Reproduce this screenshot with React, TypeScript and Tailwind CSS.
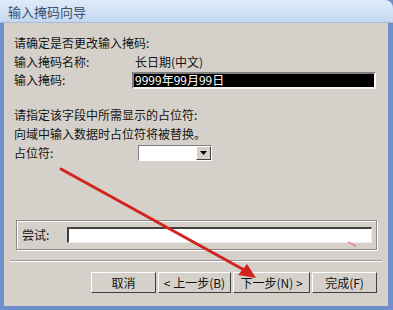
import React from 'react';

const font = { fontFamily: '"Noto Sans CJK SC", "Liberation Sans", sans-serif' };

function Btn({ label }: { label: string }) {
  return (
    <div className="h-[21px] border border-t-white border-l-white border-b-[#404040] border-r-[#404040] bg-[#d5d1ca] flex items-center justify-center text-[12px] text-[#111]">
      {label}
    </div>
  );
}

export default function App() {
  return (
    <div style={font} className="w-[393px] h-[310px] relative overflow-hidden bg-[#6f8fcb] leading-none">
      {/* title bar */}
      <div className="h-[23px] rounded-tr-[8px] bg-gradient-to-b from-[#e0ebf9] to-[#c4d7f1] border-b border-[#a8bcd8] flex items-center pl-[8px] text-[13px] text-[#3c4f6c]">
        输入掩码向导
      </div>

      <div className="ml-[4px] mr-[5px] h-[283px] bg-[#d5d1ca] text-[12px] text-[#141414] flex flex-col">
        <div className="pl-[10px] mt-[10px] h-[19px] flex items-center">请确定是否更改输入掩码:</div>
        <div className="pl-[10px] h-[19px] flex items-center">
          <span className="w-[121px]">输入掩码名称:</span>
          <span>长日期(中文)</span>
        </div>
        <div className="pl-[10px] h-[18px] flex items-center">
          <span className="w-[118px]">输入掩码:</span>
          <div className="w-[244px] h-[17px] bg-black border-t-2 border-l-2 border-t-[#808080] border-l-[#808080] border-r-2 border-b-2 border-r-white border-b-[#f4f4f4] flex items-center pl-[1px] text-white text-[12px]">
            9999年99月99日
          </div>
        </div>

        <div className="pl-[10px] mt-[16px] h-[19px] flex items-center">请指定该字段中所需显示的占位符:</div>
        <div className="pl-[10px] h-[19px] flex items-center">向域中输入数据时占位符将被替换。</div>
        <div className="pl-[10px] h-[19px] flex items-center">
          <span className="w-[124px]">占位符:</span>
          <div className="w-[74px] h-[16px] bg-white border border-t-[#808080] border-l-[#808080] border-r-white border-b-white flex justify-end">
            <div className="w-[15px] h-full bg-[#d5d1ca] border border-t-white border-l-white border-r-[#404040] border-b-[#404040] flex items-center justify-center">
              <svg width="7" height="4" viewBox="0 0 7 4"><path d="M0 0h7L3.5 4z" fill="#000" /></svg>
            </div>
          </div>
        </div>

        {/* try group */}
        <div className="ml-[12px] mt-[58px] w-[361px] h-[30px] border border-[#8a8a8a] shadow-[inset_1px_1px_0_#fff,1px_1px_0_#fff] flex items-center pl-[5px]">
          <span className="w-[45px]">尝试:</span>
          <div className="w-[305px] h-[16px] bg-white border-t-2 border-l-2 border-t-[#404040] border-l-[#404040] border-r border-b border-r-[#eee] border-b-[#eee]" />
        </div>

        {/* separator */}
        <div className="ml-[6px] mr-[6px] mt-[10px] h-[2px] border-t border-[#9a9a9a] border-b border-b-white" />

        <div className="mt-[10px] flex pl-[87px] gap-[2px]">
          <div className="w-[65px]"><Btn label="取消" /></div>
          <div className="w-[73px]"><Btn label="< 上一步(B)" /></div>
          <div className="w-[77px]"><Btn label="下一步(N) >" /></div>
          <div className="w-[65px]"><Btn label="完成(F)" /></div>
        </div>
      </div>

      {/* red annotation arrow */}
      <svg className="absolute left-0 top-0 pointer-events-none" width="393" height="310">
        <line x1="61" y1="169" x2="246" y2="271" stroke="#d3231f" strokeWidth="3" strokeLinecap="round" />
        <path d="M256 278 L238 275 L247 264 Z" fill="#d3231f" />
        <line x1="348" y1="242" x2="356" y2="246" stroke="#e08a9a" strokeWidth="1.5" />
      </svg>
    </div>
  );
}
